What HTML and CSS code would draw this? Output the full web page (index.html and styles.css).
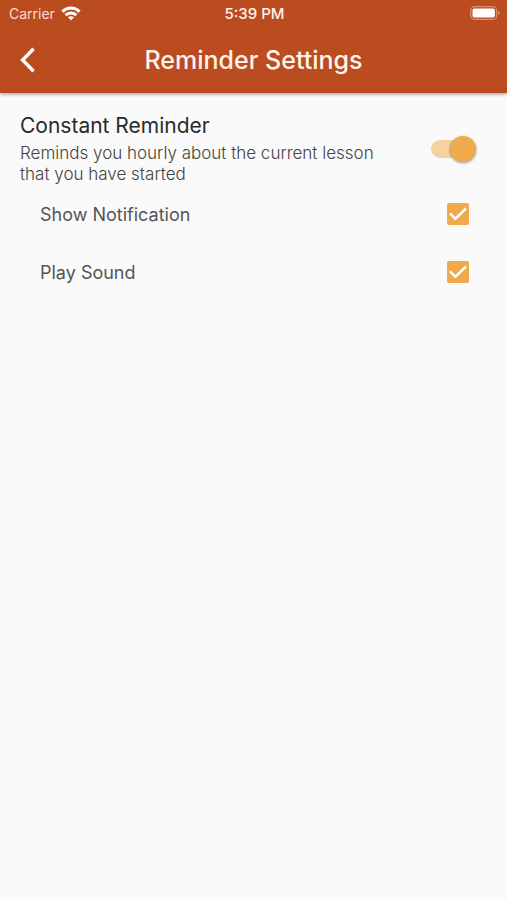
FILE: index.html
```html
<!DOCTYPE html>
<html lang="en">
<head>
    <title>Reminder Settings</title>
    <meta charset="UTF-8">
    <meta name="viewport" content="width=device-width, initial-scale=1.0">
    <link rel="stylesheet" href="styles.css">
</head>
<body>
    <header class="header">
        <div class="status-bar">
            <div class="carrier">
                <span>Carrier</span>
                <svg width="20" height="15" viewBox="0 0 20 15" fill="none" stroke="#fff" stroke-width="3" aria-hidden="true">
                    <path d="M1.4 5.6C6.4 .9 13.6 .9 18.6 5.6"/>
                    <path d="M4.6 9.1C7.6 6.3 12.4 6.3 15.4 9.1"/>
                    <path d="M7 11.3C8.7 9.8 11.3 9.8 13 11.3L10 14.4Z" fill="#fff" stroke="none"/>
                </svg>
            </div>
            <span class="time">5:39 PM</span>
            <svg class="battery" width="30" height="14" viewBox="0 0 30 14" aria-label="Battery full">
                <rect x="0.7" y="0.7" width="26" height="12.6" rx="3.8" fill="none" stroke="#dd8f70" stroke-width="1.2"/>
                <rect x="2.5" y="2.5" width="22.4" height="9" rx="2" fill="#fff"/>
                <path d="M28 4.8C30 5.6 30 8.4 28 9.2Z" fill="#dd8f70"/>
            </svg>
        </div>
        <div class="title-bar">
            <button type="button" class="back" aria-label="Back">
                <svg width="16" height="26" viewBox="0 0 16 26" fill="none" stroke="#fff" stroke-width="3.4" aria-hidden="true">
                    <path d="M13.6 1.8L2.6 13L13.6 24.2"/>
                </svg>
            </button>
            <h1>Reminder Settings</h1>
        </div>
    </header>

    <main class="settings">
        <div class="setting">
            <label for="constant">
                <span class="setting-title">Constant Reminder</span>
                <span class="setting-text">Reminds you hourly about the current lesson that you have started</span>
            </label>
            <input type="checkbox" role="switch" class="switch" id="constant" checked>
        </div>
        <div class="option">
            <label for="notification">Show Notification</label>
            <input type="checkbox" class="checkbox" id="notification" checked>
        </div>
        <div class="option">
            <label for="sound">Play Sound</label>
            <input type="checkbox" class="checkbox" id="sound" checked>
        </div>
    </main>
</body>
</html>
```

FILE: styles.css
```css
body {
    font-family: Inter, "Liberation Sans", sans-serif;
    margin: 0;
    background-color: #fafafa;
    color: #444;
}

/* Header */
.header {
    background-color: #bb4c20;
    color: #fff3ea;
    box-shadow: 0 1px 4px rgba(0, 0, 0, 0.4);
}

.status-bar {
    display: grid;
    grid-template-columns: 1fr auto 1fr;
    align-items: center;
    height: 26px;
    padding: 0 7px 0 9px;
    font-size: 14px;
}

.carrier {
    display: flex;
    align-items: center;
    gap: 6px;
    color: #f8dccf;
}

.time {
    font-size: 15px;
    font-weight: 500;
}

.battery {
    justify-self: end;
}

.title-bar {
    display: grid;
    grid-template-columns: 56px 1fr 56px;
    align-items: center;
    height: 67px;
}

.back {
    display: flex;
    justify-content: center;
    padding: 10px 0;
    border: none;
    background: none;
    cursor: pointer;
}

h1 {
    margin: 0;
    font-size: 25px;
    font-weight: 500;
    text-align: center;
}

/* Settings list */
.setting {
    display: flex;
    justify-content: space-between;
    align-items: center;
    padding: 19px 31px 0 20px;
}

.setting label {
    max-width: 380px;
}

.setting-title,
.setting-text {
    display: block;
}

.setting-title {
    margin-bottom: 3px;
    font-size: 21px;
    line-height: 28px;
    color: #2a2a2a;
}

.setting-text {
    font-size: 17px;
    line-height: 21px;
    font-weight: 300;
}

.option {
    display: flex;
    justify-content: space-between;
    align-items: center;
    height: 58px;
    padding: 0 38px 0 40px;
    font-size: 18px;
    color: #555;
}

.switch,
.checkbox {
    appearance: none;
    flex: none;
    margin: 0;
    cursor: pointer;
}

.switch {
    display: flex;
    align-items: center;
    width: 45px;
    height: 18px;
    border-radius: 9px;
    background-color: #ddd;
}

.switch::before {
    content: "";
    width: 26px;
    height: 26px;
    border-radius: 50%;
    background-color: #fff;
    box-shadow: 0 1px 3px rgba(0, 0, 0, 0.4);
}

.switch:checked {
    justify-content: flex-end;
    background-color: #f5d3a0;
}

.switch:checked::before {
    background-color: #efab4b;
}

.checkbox {
    display: grid;
    place-items: center;
    width: 22px;
    height: 22px;
    border: 2px solid #777;
    border-radius: 2px;
}

.checkbox:checked {
    border-color: #efab4b;
    background-color: #efab4b;
}

.checkbox:checked::before {
    content: "";
    width: 18px;
    height: 14px;
    background-color: #fff;
    clip-path: polygon(0 50%, 10% 39%, 35% 71%, 90% 4%, 100% 16%, 35% 97%);
}
```
